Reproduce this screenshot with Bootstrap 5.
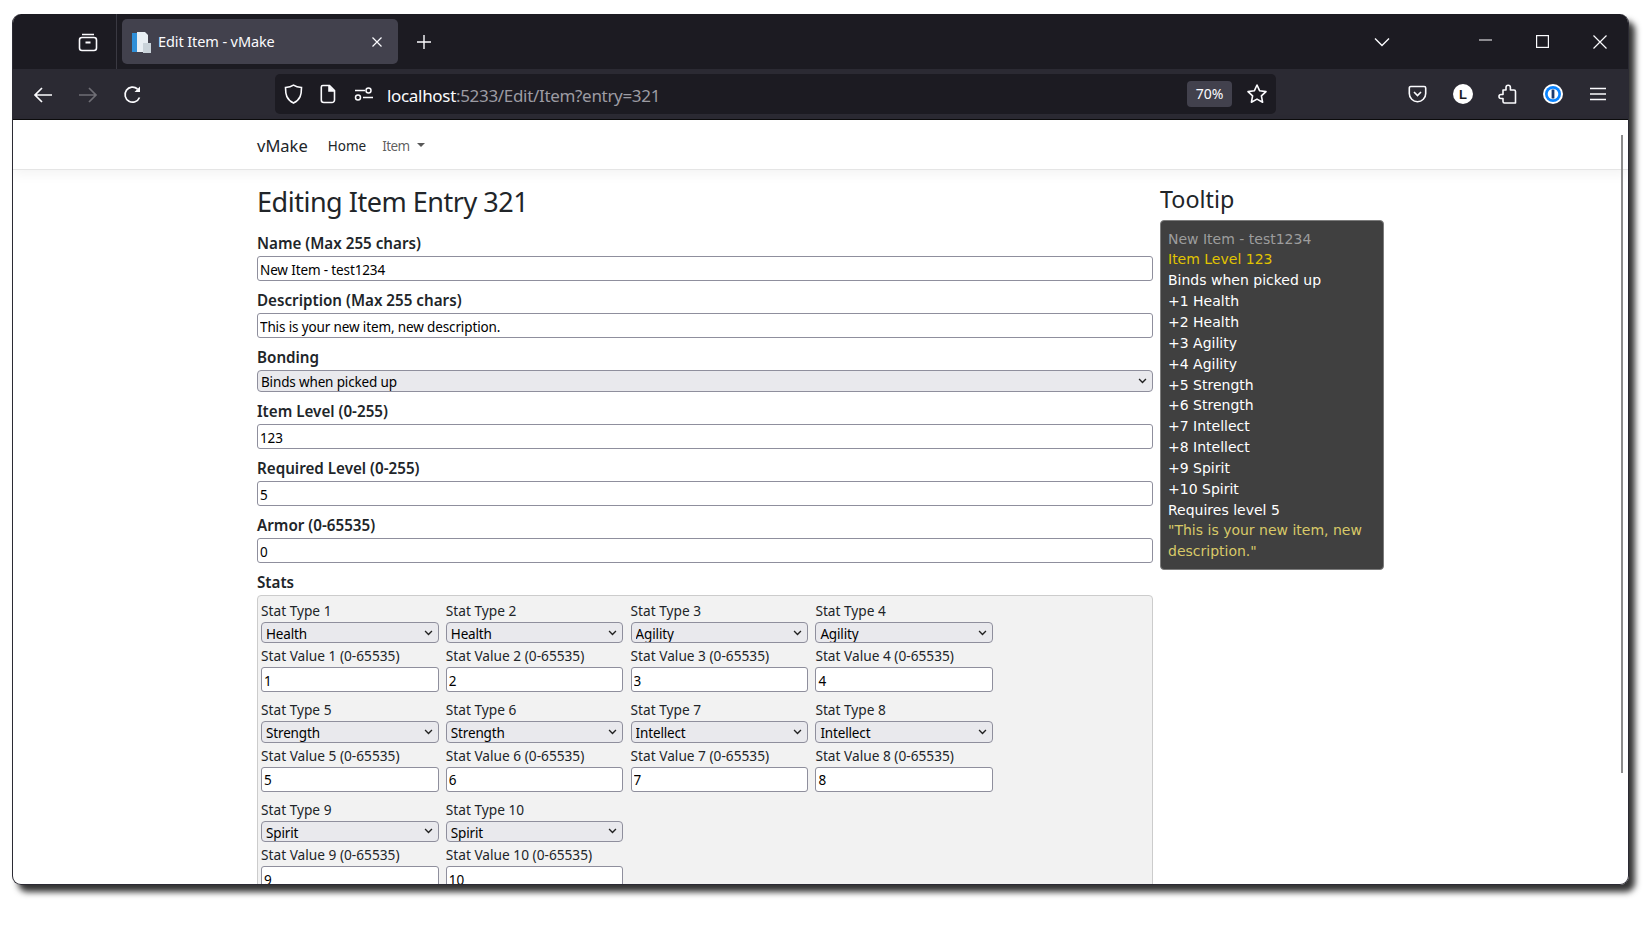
<!DOCTYPE html>
<html lang="en">
<head>
  <meta charset="UTF-8" />
  <meta name="viewport" content="width=device-width, initial-scale=1.0" />
  <title>Edit Item - vMake</title>
  <link rel="stylesheet" href="https://cdn.jsdelivr.net/npm/bootstrap@5.3.0/dist/css/bootstrap.min.css">
  <style>
    html, body { height: 100%; overflow: hidden; background: #fff; }
    body { font-family: "Noto Sans", "Liberation Sans", sans-serif; color: #212529; padding: 14px 0 0 12px; }

    /* browser window */
    .app-window { position: relative; width: 1617px; height: 871px; border-radius: 9px; overflow: hidden; background: #fff; border: 1px solid #2b2a33; border-top: 0; }
    .window-shadow { width: 1617px; height: 871px; border-radius: 9px; box-shadow: 6px 7px 6px rgba(0, 0, 0, .8); }
    .tab-strip { height: 55px; background: #1c1b22; color: #fbfbfe; }
    .view-slot { width: 104px; height: 55px; border-right: 1px solid #3a3942; padding: 0 17px 0 0; }
    .browser-tab { width: 276px; height: 45px; margin: 5px 0 0 5px; background: #42414d; border-radius: 5px; padding: 1px 15px 0 9px; font-size: 14.500px; }
    .tab-title { margin-left: 6px; letter-spacing: -.1px; }
    .new-tab { margin-left: 18px; padding-top: 1px; }
    .tab-list { margin-left: auto; margin-right: 67px; }
    .win-btn { width: 57px; }
    .tool-strip { height: 51px; background: #2b2a33; color: #fbfbfe; border-bottom: 1px solid #0c0c0d; padding-bottom: 1px; }
    .tool-btn { width: 45px; }
    .nav-btns { padding-left: 7px; width: 262px; }
    .url-bar { width: 1001px; height: 40px; background: #1c1b22; border-radius: 5px; padding: 0 7px 0 9px; }
    .url-icon { width: 35px; }
    .url-text { font-size: 17px; margin-left: -2px; padding-top: 4px; color: #9c9ba3; letter-spacing: -.32px; }
    .url-text strong { font-weight: 400; color: #fbfbfe; }
    .zoom-pill { margin-left: auto; width: 45px; height: 26px; border-radius: 4px; background: #42414d; font-size: 14px; }
    .star-btn { margin-left: 14px; margin-right: 1px; }
    .right-tools { padding-left: 119px; margin-top: -2px; }
    .tool-slot { width: 45px; }
    .page-scroll { position: absolute; right: 5px; top: 121px; width: 2px; height: 638px; background: #8c8c8c; }

    /* page */
    .app-nav { height: 50px; padding: 3px 0 0 244px; border-bottom: 1px solid #e5e5e5; box-shadow: 0 4px 12px rgba(0, 0, 0, .05); }
    .app-nav .navbar-brand { font-size: 16.500px; padding: 0; margin-right: 20px; color: #212529; }
    .app-nav .nav-link { font-size: 13.500px; padding: 0 7px; }
    .app-nav .nav-link.home-link { color: #212529; padding-left: 0; }
    .app-nav .dropdown-toggle { padding-left: 6px; letter-spacing: -.6px; }
    .app-nav .dropdown-toggle::after { margin-left: 8px; border-top-width: 4px; border-right-width: 4px; border-left-width: 4px; }
    .page-cols { padding-left: 244px; gap: 7px; }
    .edit-col { width: 896px; padding-top: 15px; }
    .tip-col { width: 224px; padding-top: 14px; }
    .edit-title { font-size: 27px; letter-spacing: -.48px; line-height: 34px; margin-bottom: 14px; font-weight: 400; }
    .tip-title { font-size: 23.300px; line-height: 30px; margin-bottom: 6px; font-weight: 400; }
    .field-label { display: block; font-size: 15.200px; font-weight: 600; line-height: 20px; margin-bottom: 3px; }
    .field-input.form-control { height: 24.700px; min-height: 0; margin-bottom: 9.300px; padding: 3px 2px 0; font-size: 13.500px; letter-spacing: -.13px; color: #000; border: 1px solid #8f8f9d; border-radius: 3px; }
    .field-input.form-select, .stat-input.form-select { padding: 1px 20px 0 3px; font-size: 13.500px; letter-spacing: -.15px; color: #000; background-color: #e9e9ed; border: 1px solid #8f8f9d; border-radius: 4px; background-image: url("data:image/svg+xml,%3csvg xmlns='http://www.w3.org/2000/svg' viewBox='0 0 10 7'%3e%3cpath fill='none' stroke='%23222' stroke-width='1.6' d='M1 1.200l4 4 4-4'/%3e%3c/svg%3e"); background-size: 9px 6px; background-position: right 5px center; }
    .field-input.form-select { height: 21.700px; margin-bottom: 9.300px; }
    .stats-box { height: 400px; padding: 6px 3px; background: #f2f2f2; border: 1px solid #ccc; border-radius: 4px; display: grid; grid-template-columns: repeat(4, 177.500px); column-gap: 7.300px; row-gap: 8.800px; align-content: start; }
    .stat-label { display: block; font-size: 13.700px; line-height: 18px; margin-bottom: 2px; }
    .stat-input.form-select { height: 21.500px; margin-bottom: 4px; padding-left: 4px; }
    .stat-input.form-control { height: 25px; padding: 2px 2px 0; font-size: 13.500px; color: #000; border: 1px solid #8f8f9d; border-radius: 3px; }
    .tip-box { background: #404040; border: 1px solid #7c7c7c; border-radius: 4px; padding: 7.600px 7px 7px; color: #fff; font-family: "DejaVu Sans", sans-serif; font-size: 14px; line-height: 20.850px; }
    .tip-name { color: #9d9d9d; }
    .tip-level { color: #e0c400; }
    .tip-quote { color: #d8c968; }
  </style>
</head>
<body>
  <div class="window-shadow">
  <div class="app-window">

    <div class="tab-strip d-flex align-items-start">
      <div class="view-slot d-flex align-items-center justify-content-end">
        <svg width="22" height="22" viewBox="0 0 22 22" fill="none" stroke="#fbfbfe" stroke-width="1.6"><path d="M5 3.500h12"/><rect x="2.500" y="6.500" width="17" height="13" rx="2.500"/><path d="M8.500 11.500h5" stroke-width="2"/></svg>
      </div>
      <div class="browser-tab d-flex align-items-center">
        <svg width="21" height="21" viewBox="0 0 21 21"><rect x="1" y="1" width="5" height="19" fill="#2f8fd8"/><path d="M6 0h8l3 3v17H6z" fill="#e8eef3"/><rect x="12" y="11" width="8" height="10" fill="#c9d2d9"/></svg>
        <span class="tab-title">Edit Item - vMake</span>
        <svg class="ms-auto" width="12" height="12" viewBox="0 0 12 12" stroke="#fbfbfe" stroke-width="1.2"><path d="M1.500 1.500l9 9M10.500 1.500l-9 9"/></svg>
      </div>
      <div class="new-tab d-flex align-items-center h-100">
        <svg width="16" height="16" viewBox="0 0 16 16" stroke="#fbfbfe" stroke-width="1.4"><path d="M8 1v14M1 8h14"/></svg>
      </div>
      <div class="tab-list d-flex align-items-center h-100">
        <svg width="16" height="10" viewBox="0 0 16 10" fill="none" stroke="#fbfbfe" stroke-width="1.4"><path d="M1 1.500l7 7 7-7"/></svg>
      </div>
      <div class="win-btn d-flex align-items-center justify-content-center h-100">
        <svg width="13" height="13" viewBox="0 0 13 13" stroke="#fbfbfe" stroke-width="1.2"><path d="M0 5h13"/></svg>
      </div>
      <div class="win-btn d-flex align-items-center justify-content-center h-100">
        <svg width="13" height="13" viewBox="0 0 13 13" fill="none" stroke="#fbfbfe" stroke-width="1.2"><rect x=".6" y=".6" width="11.800" height="11.800"/></svg>
      </div>
      <div class="win-btn d-flex align-items-center justify-content-center h-100">
        <svg width="14" height="14" viewBox="0 0 14 14" stroke="#fbfbfe" stroke-width="1.2"><path d="M.5.5l13 13M13.500.5l-13 13"/></svg>
      </div>
    </div>

    <div class="tool-strip d-flex align-items-center">
      <div class="nav-btns d-flex">
        <div class="tool-btn text-center"><svg width="20" height="18" viewBox="0 0 20 18" fill="none" stroke="#fbfbfe" stroke-width="1.7"><path d="M19 9H2M9 2L2 9l7 7"/></svg></div>
        <div class="tool-btn text-center"><svg width="20" height="18" viewBox="0 0 20 18" fill="none" stroke="#6f6e75" stroke-width="1.7"><path d="M1 9h17M11 2l7 7-7 7"/></svg></div>
        <div class="tool-btn text-center"><svg width="20" height="20" viewBox="0 0 20 20" fill="none" stroke="#fbfbfe" stroke-width="1.7"><path d="M16.500 12.500A7.500 7.500 0 1 1 14.500 4"/><path d="M17 1.500v5.500h-5.500z" fill="#fbfbfe" stroke="none"/></svg></div>
      </div>
      <div class="url-bar d-flex align-items-center">
        <div class="url-icon"><svg class="d-block" width="19" height="20" viewBox="0 0 19 20" fill="none" stroke="#fbfbfe" stroke-width="1.6"><path d="M9.500 1.200C7 2.800 4.500 3.300 1.500 3.500c0 7 1 12 8 15.500 7-3.500 8-8.500 8-15.500-3-.2-5.500-.7-8-2.300z"/></svg></div>
        <div class="url-icon"><svg class="d-block" width="18" height="20" viewBox="0 0 18 20" fill="none" stroke="#fbfbfe" stroke-width="1.6"><path d="M3.800 1.500h6.700l5 5v9.500a2.500 2.500 0 0 1-2.500 2.500H4.800a2.500 2.500 0 0 1-2.500-2.500V3a1.500 1.500 0 0 1 1.500-1.500z"/><path d="M10 1.500V7h5.500" fill="#fbfbfe"/></svg></div>
        <div class="url-icon"><svg class="d-block" width="20" height="16" viewBox="0 0 20 16" fill="none" stroke="#fbfbfe" stroke-width="1.5"><path d="M1 4.500h10"/><circle cx="14.500" cy="4.500" r="2.500"/><circle cx="4" cy="11.500" r="2.500"/><path d="M9 11.500h10"/></svg></div>
        <div class="url-text"><strong>localhost</strong>:5233/Edit/Item?entry=321</div>
        <div class="zoom-pill d-flex align-items-center justify-content-center">70%</div>
        <div class="star-btn"><svg class="d-block" width="22" height="22" viewBox="0 0 22 22" fill="none" stroke="#fbfbfe" stroke-width="1.6" stroke-linejoin="round"><path d="M11 2l2.700 5.800 6.300.8-4.600 4.300 1.200 6.300L11 16.100 5.400 19.200l1.200-6.300L2 8.600l6.300-.8z"/></svg></div>
      </div>
      <div class="right-tools d-flex align-items-center">
        <div class="tool-slot text-center"><svg width="19" height="18" viewBox="0 0 19 18" fill="none" stroke="#fbfbfe" stroke-width="1.6"><path d="M2.800 1.500h13.400a1.500 1.500 0 0 1 1.500 1.500v5.500a8.200 8.200 0 0 1-16.400 0V3a1.500 1.500 0 0 1 1.500-1.500z"/><path d="M6 7l3.500 3.500L13 7"/></svg></div>
        <div class="tool-slot text-center"><svg width="20" height="20" viewBox="0 0 20 20"><circle cx="10" cy="10" r="10" fill="#fff"/><text x="10" y="14.500" text-anchor="middle" font-family="Liberation Sans, sans-serif" font-size="13" font-weight="700" fill="#1c1b22">L</text></svg></div>
        <div class="tool-slot text-center"><svg width="19" height="21" viewBox="0 0 19 21" fill="none" stroke="#fbfbfe" stroke-width="1.600" stroke-linejoin="round"><path d="M8 6V3.500a2.200 2.200 0 0 1 4.400 0V6h3.600a1.500 1.500 0 0 1 1.500 1.500V19H6.500a1.500 1.500 0 0 1-1.500-1.500v-3H3a2 2 0 0 1 0-4h2V6z"/></svg></div>
        <div class="tool-slot text-center"><svg width="20" height="20" viewBox="0 0 20 20"><circle cx="10" cy="10" r="10" fill="#fff"/><circle cx="10" cy="10" r="8" fill="#0a84ff"/><circle cx="10" cy="10" r="5.300" fill="#fff"/><rect x="8.600" y="5.500" width="2.800" height="9" fill="#1c3b6e"/></svg></div>
        <div class="tool-slot text-center"><svg width="16" height="14" viewBox="0 0 16 14" stroke="#fbfbfe" stroke-width="1.500"><path d="M0 1.500h16M0 7h16M0 12.500h16"/></svg></div>
      </div>
    </div>

    <nav class="navbar navbar-expand-sm app-nav">
      <a class="navbar-brand" href="#">vMake</a>
      <ul class="navbar-nav flex-row">
        <li class="nav-item"><a class="nav-link home-link" href="#">Home</a></li>
        <li class="nav-item dropdown"><a class="nav-link dropdown-toggle" href="#" role="button" data-bs-toggle="dropdown">Item</a></li>
      </ul>
    </nav>

    <div class="page-cols d-flex">
      <div class="edit-col">
        <h1 class="edit-title">Editing Item Entry 321</h1>

        <label class="field-label" for="itemName">Name (Max 255 chars)</label>
        <input id="itemName" class="form-control field-input" value="New Item - test1234">

        <label class="field-label" for="itemDesc">Description (Max 255 chars)</label>
        <input id="itemDesc" class="form-control field-input" value="This is your new item, new description.">

        <label class="field-label" for="itemBonding">Bonding</label>
        <select id="itemBonding" class="form-select field-input"><option>Binds when picked up</option></select>

        <label class="field-label" for="itemLevel">Item Level (0-255)</label>
        <input id="itemLevel" class="form-control field-input" value="123">

        <label class="field-label" for="itemReq">Required Level (0-255)</label>
        <input id="itemReq" class="form-control field-input" value="5">

        <label class="field-label" for="itemArmor">Armor (0-65535)</label>
        <input id="itemArmor" class="form-control field-input" value="0">

        <label class="field-label">Stats</label>
        <div class="stats-box">
          <div><label class="stat-label">Stat Type 1</label><select class="form-select stat-input"><option>Health</option></select><label class="stat-label">Stat Value 1 (0-65535)</label><input class="form-control stat-input" value="1"></div>
          <div><label class="stat-label">Stat Type 2</label><select class="form-select stat-input"><option>Health</option></select><label class="stat-label">Stat Value 2 (0-65535)</label><input class="form-control stat-input" value="2"></div>
          <div><label class="stat-label">Stat Type 3</label><select class="form-select stat-input"><option>Agility</option></select><label class="stat-label">Stat Value 3 (0-65535)</label><input class="form-control stat-input" value="3"></div>
          <div><label class="stat-label">Stat Type 4</label><select class="form-select stat-input"><option>Agility</option></select><label class="stat-label">Stat Value 4 (0-65535)</label><input class="form-control stat-input" value="4"></div>
          <div><label class="stat-label">Stat Type 5</label><select class="form-select stat-input"><option>Strength</option></select><label class="stat-label">Stat Value 5 (0-65535)</label><input class="form-control stat-input" value="5"></div>
          <div><label class="stat-label">Stat Type 6</label><select class="form-select stat-input"><option>Strength</option></select><label class="stat-label">Stat Value 6 (0-65535)</label><input class="form-control stat-input" value="6"></div>
          <div><label class="stat-label">Stat Type 7</label><select class="form-select stat-input"><option>Intellect</option></select><label class="stat-label">Stat Value 7 (0-65535)</label><input class="form-control stat-input" value="7"></div>
          <div><label class="stat-label">Stat Type 8</label><select class="form-select stat-input"><option>Intellect</option></select><label class="stat-label">Stat Value 8 (0-65535)</label><input class="form-control stat-input" value="8"></div>
          <div><label class="stat-label">Stat Type 9</label><select class="form-select stat-input"><option>Spirit</option></select><label class="stat-label">Stat Value 9 (0-65535)</label><input class="form-control stat-input" value="9"></div>
          <div><label class="stat-label">Stat Type 10</label><select class="form-select stat-input"><option>Spirit</option></select><label class="stat-label">Stat Value 10 (0-65535)</label><input class="form-control stat-input" value="10"></div>
        </div>
      </div>

      <div class="tip-col">
        <h3 class="tip-title">Tooltip</h3>
        <div class="tip-box">
          <div class="tip-name">New Item - test1234</div>
          <div class="tip-level">Item Level 123</div>
          <div>Binds when picked up</div>
          <div>+1 Health</div>
          <div>+2 Health</div>
          <div>+3 Agility</div>
          <div>+4 Agility</div>
          <div>+5 Strength</div>
          <div>+6 Strength</div>
          <div>+7 Intellect</div>
          <div>+8 Intellect</div>
          <div>+9 Spirit</div>
          <div>+10 Spirit</div>
          <div>Requires level 5</div>
          <div class="tip-quote">"This is your new item, new description."</div>
        </div>
      </div>
    </div>

    <div class="page-scroll"></div>
  </div>
  </div>
  <script src="https://cdn.jsdelivr.net/npm/bootstrap@5.3.0/dist/js/bootstrap.bundle.min.js"></script>
</body>
</html>
